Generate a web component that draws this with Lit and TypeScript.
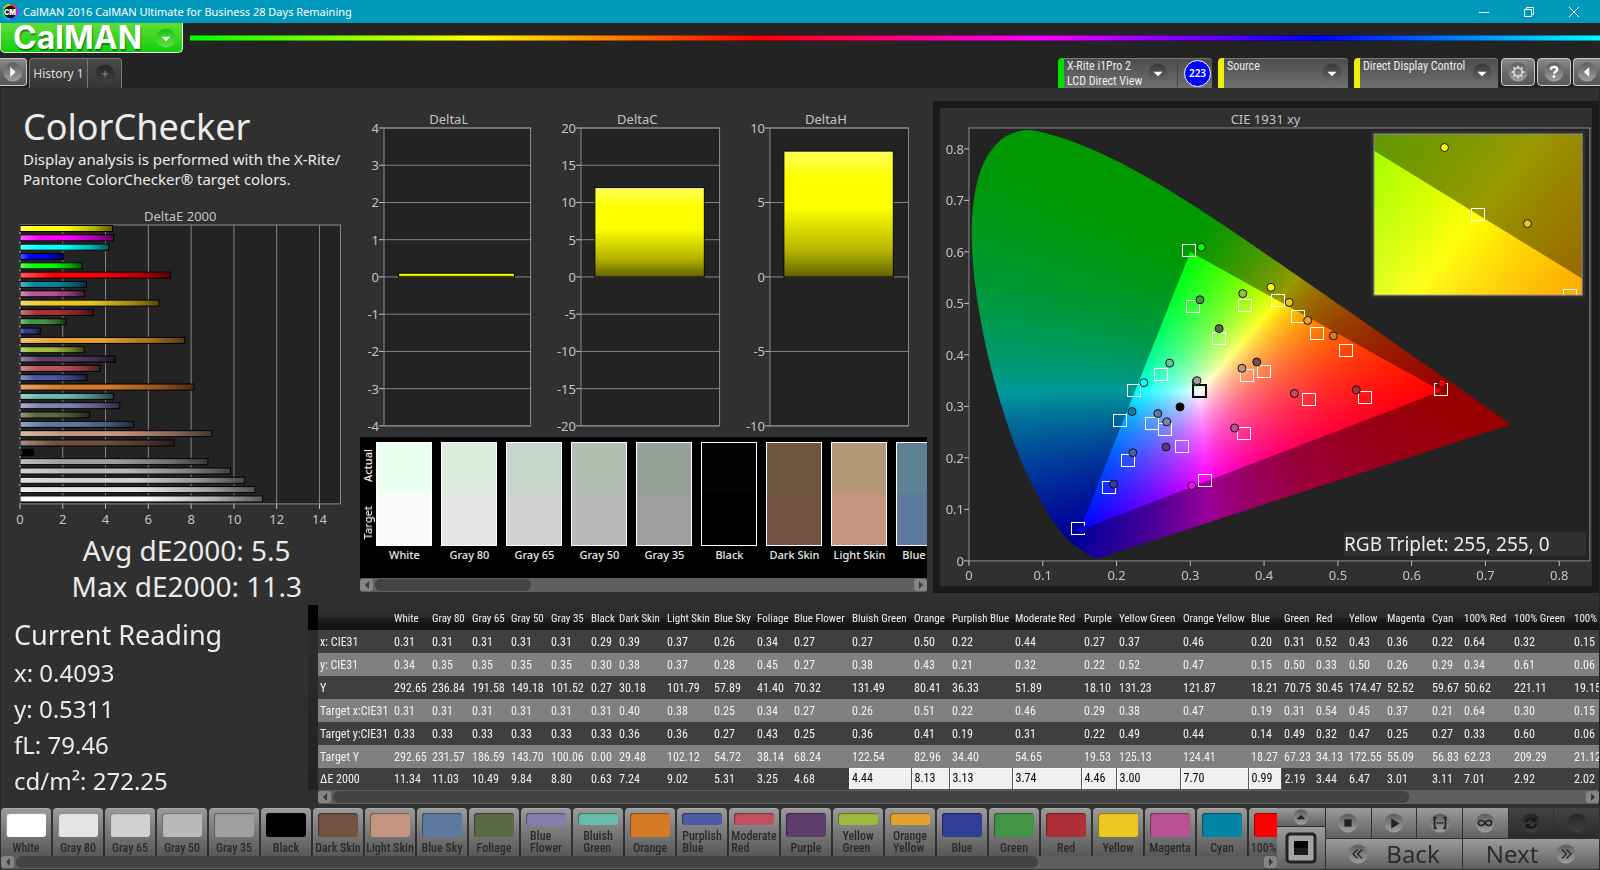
import { LitElement, html, svg, css } from "lit";
import { customElement, property } from "lit/decorators.js";
import { classMap } from "lit/directives/class-map.js";

interface Patch { name: string; color: string; actual?: string; twoLine?: boolean }

const PATCHES: Patch[] = [
  { name: "White", color: "#fafafa", actual: "#e9ffef" },
  { name: "Gray 80", color: "#e6e6e6", actual: "#dbecdf" },
  { name: "Gray 65", color: "#d1d1d1", actual: "#c7d6ca" },
  { name: "Gray 50", color: "#bababa", actual: "#b2c0b4" },
  { name: "Gray 35", color: "#9f9f9f", actual: "#96a197" },
  { name: "Black", color: "#000000", actual: "#030303" },
  { name: "Dark Skin", color: "#735244", actual: "#6c563c" },
  { name: "Light Skin", color: "#c39581", actual: "#b39979" },
  { name: "Blue Sky", color: "#5d7a9e", actual: "#5f8194" },
  { name: "Foliage", color: "#586b42" },
  { name: "Blue Flower", color: "#827fb0", twoLine: true },
  { name: "Bluish Green", color: "#67bdaa", twoLine: true },
  { name: "Orange", color: "#d77a28" },
  { name: "Purplish Blue", color: "#4b5ba5", twoLine: true },
  { name: "Moderate Red", color: "#c0505f", twoLine: true },
  { name: "Purple", color: "#5b3e6b" },
  { name: "Yellow Green", color: "#9dbb3e", twoLine: true },
  { name: "Orange Yellow", color: "#e6a22e", twoLine: true },
  { name: "Blue", color: "#323e95" },
  { name: "Green", color: "#449447" },
  { name: "Red", color: "#ae2f38" },
  { name: "Yellow", color: "#eac721" },
  { name: "Magenta", color: "#b95293" },
  { name: "Cyan", color: "#0386a3" },
  { name: "100% Red", color: "#ff0000" },
];

const DELTA_E: [number, string][] = [
  [4.33, "#ffff00"], [4.38, "#ff00ff"], [4.15, "#00ffff"], [2.02, "#0000ff"], [2.9, "#00ff00"],
  [7.05, "#ff0000"], [3.11, "#0386a3"], [3.01, "#b95293"], [6.5, "#eac721"], [3.44, "#ae2f38"],
  [2.15, "#449447"], [0.95, "#323e95"], [7.7, "#e6a22e"], [3.0, "#9dbb3e"], [4.46, "#5b3e6b"],
  [3.74, "#c0505f"], [3.13, "#4b5ba5"], [8.13, "#d77a28"], [4.38, "#67bdaa"], [4.66, "#827fb0"],
  [3.25, "#586b42"], [5.31, "#5d7a9e"], [8.97, "#c39581"], [7.2, "#735244"], [0.63, "#000000"],
  [8.78, "#9f9f9f"], [9.84, "#bababa"], [10.49, "#d1d1d1"], [10.99, "#e6e6e6"], [11.34, "#ffffff"],
];

const COLUMNS = [
  "White", "Gray 80", "Gray 65", "Gray 50", "Gray 35", "Black", "Dark Skin", "Light Skin", "Blue Sky",
  "Foliage", "Blue Flower", "Bluish Green", "Orange", "Purplish Blue", "Moderate Red", "Purple",
  "Yellow Green", "Orange Yellow", "Blue", "Green", "Red", "Yellow", "Magenta", "Cyan", "100% Red",
  "100% Green", "100% Blue",
];
const COLUMN_WIDTHS = [
  38, 40, 39, 40, 40, 28, 48, 47, 43, 37, 58, 62, 38, 63, 69, 35, 64, 68, 33, 32, 33, 38, 45, 32, 50, 60, 60,
];
const ROWS: [string, string][] = [
  ["x: CIE31", "0.31 0.31 0.31 0.31 0.31 0.29 0.39 0.37 0.26 0.34 0.27 0.27 0.50 0.22 0.44 0.27 0.37 0.46 0.20 0.31 0.52 0.43 0.36 0.22 0.64 0.32 0.15"],
  ["y: CIE31", "0.34 0.35 0.35 0.35 0.35 0.30 0.38 0.37 0.28 0.45 0.27 0.38 0.43 0.21 0.32 0.22 0.52 0.47 0.15 0.50 0.33 0.50 0.26 0.29 0.34 0.61 0.06"],
  ["Y", "292.65 236.84 191.58 149.18 101.52 0.27 30.18 101.79 57.89 41.40 70.32 131.49 80.41 36.33 51.89 18.10 131.23 121.87 18.21 70.75 30.45 174.47 52.52 59.67 50.62 221.11 19.15"],
  ["Target x:CIE31", "0.31 0.31 0.31 0.31 0.31 0.31 0.40 0.38 0.25 0.34 0.27 0.26 0.51 0.22 0.46 0.29 0.38 0.47 0.19 0.31 0.54 0.45 0.37 0.21 0.64 0.30 0.15"],
  ["Target y:CIE31", "0.33 0.33 0.33 0.33 0.33 0.33 0.36 0.36 0.27 0.43 0.25 0.36 0.41 0.19 0.31 0.22 0.49 0.44 0.14 0.49 0.32 0.47 0.25 0.27 0.33 0.60 0.06"],
  ["Target Y", "292.65 231.57 186.59 143.70 100.06 0.00 29.48 102.12 54.72 38.14 68.24 122.54 82.96 34.40 54.65 19.53 125.13 124.41 18.27 67.23 34.13 172.55 55.09 56.83 62.23 209.29 21.12"],
  ["ΔE 2000", "11.34 11.03 10.49 9.84 8.80 0.63 7.24 9.02 5.31 3.25 4.68 4.44 8.13 3.13 3.74 4.46 3.00 7.70 0.99 2.19 3.44 6.47 3.01 3.11 7.01 2.92 2.02"],
];
const SELECTED_FROM = 11;
const SELECTED_TO = 18;

const TARGETS: [number, number][] = [
  [0.299, 0.602], [0.304, 0.493], [0.375, 0.495], [0.4193, 0.5053], [0.4469, 0.4743], [0.473, 0.442],
  [0.512, 0.409], [0.34, 0.431], [0.261, 0.362], [0.4, 0.367], [0.378, 0.359], [0.224, 0.33],
  [0.64, 0.332], [0.537, 0.318], [0.461, 0.314], [0.206, 0.272], [0.249, 0.267], [0.267, 0.256],
  [0.373, 0.248], [0.29, 0.223], [0.216, 0.194], [0.32, 0.156], [0.191, 0.142], [0.148, 0.063],
];
const READINGS: [number, number, string][] = [
  [0.315, 0.609, "#00ff00"], [0.313, 0.507, "#449447"], [0.371, 0.519, "#9dbb3e"], [0.4093, 0.5311, "#ffff00"],
  [0.434, 0.5018, "#eac721"], [0.459, 0.467, "#e6a22e"], [0.494, 0.437, "#d77a28"], [0.339, 0.451, "#586b42"],
  [0.272, 0.384, "#67bdaa"], [0.237, 0.346, "#00ffff"], [0.308, 0.348, "#777777"], [0.309, 0.35, "#9f9f9f"],
  [0.37, 0.374, "#c39581"], [0.39, 0.386, "#735244"], [0.441, 0.325, "#c0505f"], [0.525, 0.332, "#ae2f38"],
  [0.641, 0.345, "#ff0000"], [0.286, 0.299, "#000000"], [0.256, 0.286, "#5d7a9e"], [0.221, 0.29, "#0386a3"],
  [0.268, 0.27, "#827fb0"], [0.36, 0.258, "#b95293"], [0.267, 0.221, "#5b3e6b"], [0.222, 0.21, "#4b5ba5"],
  [0.196, 0.149, "#323e95"], [0.302, 0.146, "#ff00ff"], [0.153, 0.061, "#0000ff"],
];
const LOCUS: [number, number][] = [
  [0.1741, 0.005], [0.1714, 0.0051], [0.1689, 0.0069], [0.1644, 0.0109], [0.1566, 0.0177], [0.144, 0.0297],
  [0.1355, 0.0399], [0.1241, 0.0578], [0.1096, 0.0868], [0.0913, 0.1327], [0.0687, 0.2007], [0.0454, 0.295],
  [0.0235, 0.4127], [0.0082, 0.5384], [0.0039, 0.6548], [0.0139, 0.7502], [0.0389, 0.812], [0.0743, 0.836],
  [0.1142, 0.8262], [0.1547, 0.8059], [0.1929, 0.7816], [0.2296, 0.7543], [0.2658, 0.7243], [0.3016, 0.6923],
  [0.3373, 0.6589], [0.3731, 0.6245], [0.4441, 0.5547], [0.5125, 0.4866], [0.5752, 0.4242], [0.627, 0.3725],
  [0.6915, 0.3083], [0.719, 0.2809], [0.7347, 0.2653],
];

const pct = (v: number) => `${(v * 100).toFixed(2)}%`;

const shine = svg`
  <linearGradient id="shineX"><stop offset="0" stop-color="#fff" stop-opacity=".35"/><stop offset=".22" stop-color="#fff" stop-opacity="0"/>
    <stop offset=".5" stop-color="#000" stop-opacity="0"/><stop offset=".8" stop-color="#000" stop-opacity=".3"/><stop offset="1" stop-color="#000" stop-opacity=".65"/></linearGradient>
  <linearGradient id="shineY" x2="0" y2="1"><stop offset="0" stop-color="#fff" stop-opacity=".35"/><stop offset=".22" stop-color="#fff" stop-opacity="0"/>
    <stop offset=".45" stop-color="#000" stop-opacity="0"/><stop offset=".8" stop-color="#000" stop-opacity=".3"/><stop offset="1" stop-color="#000" stop-opacity=".62"/></linearGradient>`;

const chartStyles = css`
  svg { display: block; overflow: visible; width: 100%; height: 100%; }
  text { fill: #c3c3c3; font: 13px "Noto Sans", sans-serif; }
  .end { text-anchor: end; }
  .mid { text-anchor: middle; }
  .field { fill: #232323; }
  .frame { fill: none; stroke: #8c8c8c; stroke-width: 1; }
  .grid { stroke: #858585; stroke-width: 1; }
  .tick { stroke: #c3c3c3; stroke-width: 1; }
  .title { color: #c3c3c3; font: 13px/18px "Noto Sans", sans-serif; text-align: center; }
`;

/** Horizontal bars, one per patch. */
@customElement("delta-e-chart")
class DeltaEChart extends LitElement {
  static styles = [chartStyles, css`
    :host { display: flex; flex-direction: column; }
    .plot { flex: 1; min-height: 0; }
  `];
  render() {
    const max = 14.98;
    return html`<div class="title">DeltaE 2000</div><div class="plot"><svg role="img" aria-label="DeltaE 2000 chart">
      <defs>${shine}</defs>
      <rect class="field" width="100%" height="100%"/>
      ${[0, 2, 4, 6, 8, 10, 12, 14].map((v) => svg`
        <line class="grid" x1=${pct(v / max)} x2=${pct(v / max)} y1="0" y2="100%"/>
        <svg y="100%" x=${pct(v / max)} width="1" height="1"><line class="tick" y1="0" y2="5"/><text class="mid" y="20">${v}</text></svg>`)}
      <rect class="frame" width="100%" height="100%"/>
      ${DELTA_E.map(([v, c], i) => svg`
        <rect x="0" y=${pct((0.5 + 9.33 * i) / 279)} width=${pct(v / max)} height="6" fill=${c}/>
        <rect x="0" y=${pct((0.5 + 9.33 * i) / 279)} width=${pct(v / max)} height="6" fill="url(#shineX)" stroke="#000"/>`)}
    </svg></div>`;
  }
}

/** Single-bar column chart around zero. */
@customElement("delta-chart")
class DeltaChart extends LitElement {
  @property() label = "";
  @property({ type: Number }) max = 4;
  @property({ type: Number }) step = 1;
  @property({ type: Number }) value = 0;
  static styles = [chartStyles, css`
    :host { display: flex; flex-direction: column; }
    .plot { flex: 1; min-height: 0; padding: 0 12px 0 38px; }
    :host([max="4"]) .plot { padding-left: 30px; }
  `];
  render() {
    const ticks: number[] = [];
    for (let v = this.max; v >= -this.max; v -= this.step) ticks.push(v);
    const y = (v: number) => (this.max - v) / (2 * this.max);
    return html`<div class="title">${this.label}</div><div class="plot"><svg role="img" aria-label=${this.label}>
      <defs>${shine}</defs>
      <rect class="field" width="100%" height="100%"/>
      ${ticks.map((v) => svg`<line class="grid" x1="0" x2="100%" y1=${pct(y(v))} y2=${pct(y(v))}/>
        <svg y=${pct(y(v))} width="1" height="1"><line class="tick" x1="-5" x2="0"/><text class="end" x="-5" y="5">${v}</text></svg>`)}
      <rect class="frame" width="100%" height="100%"/>
      <rect x="10%" width="79%" y=${pct(y(this.value))} height=${pct(this.value / (2 * this.max))} fill="#ff0"/>
      <rect x="10%" width="79%" y=${pct(y(this.value))} height=${pct(this.value / (2 * this.max))} fill="url(#shineY)" stroke="#000"/>
    </svg></div>`;
  }
}

/** Chromaticity field painted for a given xy window, with targets and readings over it. */
@customElement("cie-plot")
class CiePlot extends LitElement {
  @property({ type: Number }) x0 = 0;
  @property({ type: Number }) x1 = 0.8415;
  @property({ type: Number }) y0 = 0;
  @property({ type: Number }) y1 = 0.8405;
  @property({ type: Boolean }) axes = false;
  static styles = [chartStyles, css`
    :host { display: grid; background: #232323; }
    canvas, svg { grid-area: 1 / 1; width: 100%; height: 100%; min-height: 0; min-width: 0; }
    .target { fill: none; stroke: #fff; stroke-width: 1; shape-rendering: crispEdges; }
    .white { stroke: #000; stroke-width: 2; }
    .reading { stroke: #111; stroke-width: 1; }
    svg.marks { overflow: hidden; }
  `];

  firstUpdated() {
    const canvas = this.renderRoot.querySelector("canvas")!;
    const w = (canvas.width = Math.max(2, Math.round(this.clientWidth)));
    const h = (canvas.height = Math.max(2, Math.round(this.clientHeight)));
    const ctx = canvas.getContext("2d")!;
    const toX = (x: number) => ((x - this.x0) / (this.x1 - this.x0)) * w;
    const toY = (y: number) => ((this.y1 - y) / (this.y1 - this.y0)) * h;
    const paint = (dim: number) => {
      const layer = document.createElement("canvas");
      layer.width = w;
      layer.height = h;
      const lctx = layer.getContext("2d")!;
      const image = lctx.createImageData(w, h);
      for (let j = 0; j < h; j++) {
        const y = Math.max(0.0005, this.y1 - ((j + 0.5) / h) * (this.y1 - this.y0));
        for (let i = 0; i < w; i++) {
          const x = this.x0 + ((i + 0.5) / w) * (this.x1 - this.x0);
          const X = x / y;
          const Z = (1 - x - y) / y;
          const rgb = [
            3.2406 * X - 1.5372 - 0.4986 * Z,
            -0.9689 * X + 1.8758 + 0.0415 * Z,
            0.0557 * X - 0.204 + 1.057 * Z,
          ].map((v) => Math.max(0, v));
          const top = Math.max(...rgb) || 1;
          const at = (j * w + i) * 4;
          rgb.forEach((v, k) => { image.data[at + k] = (255 * dim * v) / top; });
          image.data[at + 3] = 255;
        }
      }
      lctx.putImageData(image, 0, 0);
      return layer;
    };
    const fillPath = (path: Path2D, dim: number) => {
      ctx.fillStyle = ctx.createPattern(paint(dim), "no-repeat")!;
      ctx.fill(path);
    };
    const locus = new Path2D();
    locus.moveTo(toX(LOCUS[0][0]), toY(LOCUS[0][1]));
    for (let i = 0; i < LOCUS.length - 1; i++) {
      const p0 = LOCUS[Math.max(0, i - 1)];
      const p1 = LOCUS[i];
      const p2 = LOCUS[i + 1];
      const p3 = LOCUS[Math.min(LOCUS.length - 1, i + 2)];
      locus.bezierCurveTo(
        toX(p1[0] + (p2[0] - p0[0]) / 6), toY(p1[1] + (p2[1] - p0[1]) / 6),
        toX(p2[0] - (p3[0] - p1[0]) / 6), toY(p2[1] - (p3[1] - p1[1]) / 6),
        toX(p2[0]), toY(p2[1]),
      );
    }
    locus.closePath();
    fillPath(locus, 0.6);
    const gamut = new Path2D();
    gamut.moveTo(toX(0.64), toY(0.33));
    gamut.lineTo(toX(0.3), toY(0.6));
    gamut.lineTo(toX(0.15), toY(0.06));
    gamut.closePath();
    fillPath(gamut, 1);
  }

  render() {
    const px = (x: number) => pct((x - this.x0) / (this.x1 - this.x0));
    const py = (y: number) => pct((this.y1 - y) / (this.y1 - this.y0));
    const ticks = [0, 0.1, 0.2, 0.3, 0.4, 0.5, 0.6, 0.7, 0.8];
    return html`<canvas></canvas>
      <svg class="marks">
        ${TARGETS.map(([x, y]) => svg`<svg x=${px(x)} y=${py(y)} width="1" height="1" overflow="visible"><rect class="target" x="-7" y="-6" width="13" height="12"/></svg>`)}
        <svg x=${px(0.313)} y=${py(0.33)} width="1" height="1" overflow="visible"><rect class="target white" x="-7" y="-6" width="13" height="12"/></svg>
        ${READINGS.map(([x, y, c]) => svg`<circle class="reading" cx=${px(x)} cy=${py(y)} r="4" fill=${c}/>`)}
      </svg>
      <svg>
        <rect class="frame" width="100%" height="100%"/>
        ${this.axes ? ticks.map((v) => svg`
          <svg x=${px(v)} y="100%" width="1" height="1"><line class="tick" y2="5"/><text class="mid" y="19">${v}</text></svg>
          <svg y=${py(v)} width="1" height="1"><line class="tick" x1="-5" x2="0"/><text class="end" x="-5" y="5">${v}</text></svg>`) : ""}
      </svg>`;
  }
}

@customElement("scroll-strip")
class ScrollStrip extends LitElement {
  @property({ type: Number }) size = 50;
  static styles = css`
    :host { display: flex; align-items: center; height: 14px; background: #5f5f5f; border-radius: 2px; }
    button { flex: none; width: 13px; height: 12px; padding: 0; border: 0; border-radius: 3px; background: #858585; display: grid; place-items: center; }
    svg { width: 6px; height: 8px; fill: #3a3a3a; }
    .track { flex: 1; margin: 0 2px; height: 12px; }
    .thumb { height: 100%; border-radius: 6px; background: #434343; }
  `;
  render() {
    return html`<button aria-label="Scroll left"><svg viewBox="0 0 6 8"><path d="M5 0v8L1 4z"/></svg></button>
      <div class="track"><div class="thumb" style="width:${this.size}%"></div></div>
      <button aria-label="Scroll right"><svg viewBox="0 0 6 8"><path d="M1 0v8l4-4z"/></svg></button>`;
  }
}

@customElement("app-root")
class AppRoot extends LitElement {
  static styles = css`
    :host { display: flex; flex-direction: column; height: 100vh; overflow: hidden; background: #232323; color: #ebebeb; font-family: "Noto Sans", "Open Sans", sans-serif; }
    * { box-sizing: border-box; }
    button { font-family: inherit; color: inherit; padding: 0; margin: 0; border: 0; cursor: pointer; }
    h1, h2, p { margin: 0; font-weight: 400; }

    .titlebar { flex: none; height: 23px; background: #0099bc; color: #fff; display: flex; align-items: center; font-size: 11px; padding-right: 4px; }
    .titlebar .appicon { width: 16px; height: 16px; margin: 0 5px 0 2px; }
    .titlebar .name { flex: 1; }
    .winbtn { width: 45px; height: 21px; background: none; display: grid; place-items: center; }
    .winbtn svg { width: 12px; height: 12px; fill: none; stroke: #fff; }

    .brandrow { flex: none; height: 30px; display: flex; gap: 7px; align-items: flex-start; }
    .brand { width: 183px; height: 30px; border: 1px solid #e8ffe8; border-top: 0; border-radius: 0 0 5px 5px; background: linear-gradient(#63de35, #0fd00f); display: flex; align-items: center; justify-content: space-between; padding: 0 6px 0 12px; }
    .brand span { font: 700 32px/28px Inter, sans-serif; color: #fff; text-shadow: 1px 2px 1px #00000066; }
    .brand svg { width: 20px; height: 20px; }
    .rainbow { flex: 1; margin-top: 12px; height: 6px; border: solid #0006; border-width: 1px 0; background: linear-gradient(90deg, #0f0, #ff0, #f00, #f0f, #00f, #0ff); }

    .tabrow { flex: none; height: 35px; padding-top: 5px; display: flex; align-items: flex-start; }
    .metal { background: linear-gradient(#8a8a8a, #6a6a6a 50%, #585858); border: 1px solid #c8c8c8; border-radius: 4px; display: grid; place-items: center; height: 28px; }
    .metal svg { width: 20px; height: 20px; }
    .metal.left { width: 27px; border-left: 0; border-radius: 0 4px 4px 0; }
    .metal.square { width: 34px; margin-right: 2px; }
    .metal.right { width: 27px; border-right: 0; border-radius: 4px 0 0 4px; }
    .tabs { display: flex; margin-left: 2px; height: 30px; border: 1px solid #777; border-bottom: 0; border-radius: 4px 4px 0 0; background: linear-gradient(#4a4a4a, #343434); }
    .tab { width: 58px; background: none; border-right: 1px solid #777; font-size: 12px; color: #dedede; }
    .tab.add { width: 33px; border: 0; display: grid; place-items: center; }
    .tab.add svg { width: 20px; height: 20px; }
    .devices { margin-left: auto; display: flex; }
    .device { height: 30px; display: flex; align-items: center; margin-right: 6px; border-left: 6px solid #f1ef00; border-radius: 4px 4px 0 0; background: linear-gradient(#4c4c4c, #707070); box-shadow: inset 0 1px #777; font: 12px/15px "Roboto Condensed", "Roboto", sans-serif; text-align: left; padding: 0 6px 0 3px; }
    .device .txt { flex: 1; align-self: flex-start; padding-top: 1px; white-space: nowrap; }
    .device svg { width: 20px; height: 20px; }
    .device.meter { width: 154px; border-color: #00e100; padding-right: 1px; }
    .device.source { width: 130px; }
    .device.display { width: 144px; margin-right: 3px; }
    .device .count { flex: none; margin-left: 9px; border-left: 1px solid #444; padding-left: 6px; height: 28px; display: grid; place-items: center; }
    .badge { width: 27px; height: 27px; border-radius: 50%; border: 1px solid #fff; background: #00f; font: 600 10px/25px "Noto Sans", sans-serif; text-align: center; color: #fff; }

    main { flex: 1; min-height: 0; display: flex; flex-direction: column; background: #303030; margin: 0 1px; }
    .upper { flex: 1; min-height: 0; display: grid; grid-template-columns: 353fr 575fr 668fr; }
    .summary { display: flex; flex-direction: column; }
    .summary h1 { font-size: 36px; line-height: 44px; padding: 17px 0 0 22px; }
    .summary p { font-size: 15px; line-height: 20px; padding: 0 0 0 22px; white-space: nowrap; }
    .summary delta-e-chart { flex: 1; margin: 18px 14px 0 19px; }
    .averages { text-align: center; font-size: 28px; line-height: 36px; padding: 28px 0 1px 18px; }

    .center { display: flex; flex-direction: column; min-width: 0; padding: 22px 3px 13px 6px; }
    .deltas { flex: 1; display: grid; grid-template-columns: repeat(3, 1fr); margin: 0 7px 0 -6px; padding-bottom: 11px; }
    .deltas delta-chart { min-width: 0; }
    .strip { background: #000; height: 141px; display: flex; overflow: hidden; }
    .sides { flex: none; width: 16px; height: 115px; display: grid; grid-template-rows: 1fr 1fr; justify-items: center; align-items: center; font-size: 11px; font-weight: 500; line-height: 14px; }
    .sides span { writing-mode: vertical-rl; rotate: 180deg; }
    .swatches { display: flex; gap: 9px; padding-top: 5px; }
    .swatch { flex: none; width: 56px; text-align: center; font-size: 11px; font-weight: 500; line-height: 16px; white-space: nowrap; }
    .chip { height: 104px; margin-bottom: 1px; border: 1px solid #fff; display: grid; grid-template-rows: 1fr 1fr; }

    .cie { margin: 13px 0 12px 3px; border: 7px solid #1a1a1a; padding: 3px 2px 25px 29px; display: flex; flex-direction: column; min-width: 0; background: #303030; }
    .cie .caption { text-align: center; font-size: 13px; line-height: 17px; color: #c3c3c3; margin-right: 28px; }
    .stage { flex: 1; display: grid; min-height: 0; grid-template: 100% / 100%; }
    .stage > * { grid-area: 1 / 1; }
    .inset { justify-self: end; align-self: start; width: 34.5%; height: 38.5%; margin: 3px 5px; border: 3px solid #303030; display: grid; }
    .triplet { justify-self: end; align-self: end; width: 242px; margin: 0 4px 5px; background: #303030; font-size: 19px; line-height: 24px; }

    .lower { flex: none; display: flex; padding-bottom: 2px; }
    .readings { flex: none; width: 307px; padding-left: 13px; }
    .readings h2 { font-size: 27px; line-height: 36px; margin: 12px 0 2px; }
    .readings div { font-size: 24px; line-height: 36px; }
    .gridwrap { flex: 1; min-width: 0; overflow: hidden; display: flex; }
    .gutter { flex: none; width: 10px; height: 185px; background: linear-gradient(#000 25px, #2c2c2c 25px, #222); }
    .sheet { flex: 1; min-width: 0; overflow: hidden; }
    table { table-layout: fixed; width: max-content; border-collapse: collapse; font: 12px/16px "Roboto Condensed", "Roboto", sans-serif; color: #f0f0f0; white-space: nowrap; }
    th, td { text-align: left; font-weight: 400; padding: 2px 0 0 3px; height: 23px; overflow: visible; }
    tbody th { padding-left: 2px; }
    thead th { height: 25px; padding-top: 3px; font-size: 11px; }
    thead tr { background: linear-gradient(#2f2f2f, #2a2a2a 50%, #1e1e1e 50%, #111); }
    tbody tr { background: #3f3f3f; }
    tbody tr:nth-child(even) { background: #808080; }
    tbody tr:last-child td, tbody tr:last-child th { height: 22px; padding-top: 0; }
    td.sel { background: #f0f0f0; color: #000; border: 1px solid #555; border-width: 0 1px 1px 0; box-shadow: inset 1px 1px #fff; }

    footer { flex: none; display: flex; height: 64px; background: #303030; padding: 2px 1px 1px; }
    .deck { flex: 1; min-width: 0; display: flex; flex-direction: column; }
    .patches { display: flex; gap: 2px; overflow: hidden; height: 50px; }
    .patch { flex: none; width: 50px; height: 50px; border-radius: 4px 4px 0 0; background: linear-gradient(#999, #555); border-top: 1px solid #aaa; display: flex; flex-direction: column; align-items: center; padding: 4px 0 4px; font: 500 12px/12px "Roboto Condensed", "Roboto", sans-serif; color: #2a2a2a; }
    .patch i { width: 40px; flex: 1; border-radius: 3px; box-shadow: inset 1px 1px 1px #0006; margin-bottom: 5px; }
    .patch span { text-align: left; white-space: nowrap; }
    .dock { flex: none; display: grid; grid-template-columns: 48px 273px; gap: 1px; }
    .stopcol { display: grid; grid-template-rows: 18px 1fr; gap: 1px; }
    .key { background: linear-gradient(#9b9b9b, #606060); display: flex; align-items: center; justify-content: center; gap: 18px; font-size: 24px; line-height: 28px; color: #2c2c2c; }
    .key svg { width: 20px; height: 20px; }
    .key.off { background: linear-gradient(#424242, #2c2c2c); }
    .stopcol .key:first-child svg { width: 16px; height: 16px; }
    .stopcol .key:last-child svg { width: 32px; height: 32px; }
    .transport { display: grid; grid-template-rows: 30px 1fr; gap: 1px; }
    .keys { display: grid; grid-template-columns: repeat(6, 1fr); gap: 1px; }
    .nav { display: grid; grid-template-columns: 1fr 1fr; gap: 1px; }
  `;

  private knob(content: unknown, fill = "url(#k)") {
    return html`<svg viewBox="0 0 22 22" aria-hidden="true">
      <defs><linearGradient id="k" x2="0" y2="1"><stop offset="0" stop-color="#5c5c5c"/><stop offset="1" stop-color="#a0a0a0"/></linearGradient>
      <linearGradient id="d" x2="0" y2="1"><stop offset="0" stop-color="#383838"/><stop offset="1" stop-color="#6c6c6c"/></linearGradient>
      <linearGradient id="n" x2="0" y2="1"><stop offset="0" stop-color="#262626"/><stop offset="1" stop-color="#404040"/></linearGradient>
      <linearGradient id="g" x2="0" y2="1"><stop offset="0" stop-color="#10c410"/><stop offset="1" stop-color="#6be04a"/></linearGradient></defs>
      <circle cx="11" cy="11" r="10.5" fill=${fill} />${content}</svg>`;
  }

  render() {
    const down = svg`<path d="M6 9.5h10L11 14.500z" fill="#fff"/>`;
    return html`
      <header class="titlebar">
        <svg class="appicon" viewBox="0 0 16 16"><g stroke-width="2" fill="none"><path d="M8 1a7 7 0 0 1 6.100 3.500" stroke="#f33"/><path d="M14.100 4.500A7 7 0 0 1 14 11.500" stroke="#f0f"/><path d="M14 11.500A7 7 0 0 1 8 15" stroke="#55f"/><path d="M8 15A7 7 0 0 1 2 11.500" stroke="#0cf"/><path d="M2 11.500A7 7 0 0 1 2 4.500" stroke="#2d2"/><path d="M2 4.500A7 7 0 0 1 8 1" stroke="#fc0"/></g><circle cx="8" cy="8" r="6.200" fill="#111"/><text x="8" y="10.500" font-size="7" font-weight="900" font-family="Inter" text-anchor="middle" fill="#fff">CM</text></svg>
        <span class="name">CalMAN 2016 CalMAN Ultimate for Business 28 Days Remaining</span>
        <button class="winbtn" aria-label="Minimize"><svg viewBox="0 0 12 12"><path d="M1 6.500h10"/></svg></button>
        <button class="winbtn" aria-label="Restore"><svg viewBox="0 0 12 12"><path d="M1.500 3.500h7v7h-7zM3.500 3.500v-2h7v7h-2"/></svg></button>
        <button class="winbtn" aria-label="Close"><svg viewBox="0 0 12 12"><path d="M1 1l10 10M11 1L1 11"/></svg></button>
      </header>
      <div class="brandrow">
        <button class="brand"><span>CalMAN</span>${this.knob(down, "url(#g)")}</button>
        <div class="rainbow"></div>
      </div>
      <nav class="tabrow">
        <button class="metal left" aria-label="Expand">${this.knob(svg`<path d="M8 5.500v11l6-5.500z" fill="#fff"/>`)}</button>
        <div class="tabs">
          <button class="tab">History 1</button>
          <button class="tab add" aria-label="Add tab">${this.knob(svg`<path d="M11 7.500v7M7.500 11h7" stroke="#999"/>`, "url(#n)")}</button>
        </div>
        <div class="devices">
          <button class="device meter"><span class="txt">X-Rite i1Pro 2<br>LCD Direct View</span>${this.knob(down, "url(#d)")}<span class="count"><span class="badge">223</span></span></button>
          <button class="device source"><span class="txt">Source</span>${this.knob(down, "url(#d)")}</button>
          <button class="device display"><span class="txt">Direct Display Control</span>${this.knob(down, "url(#d)")}</button>
          <button class="metal square" aria-label="Settings">${this.knob(svg`<g stroke="#d8d8d8" fill="none"><circle cx="11" cy="11" r="4.500" stroke-width="1.600"/><path d="M11 4v2.500M11 15.500V18M4 11h2.500M15.500 11H18M6 6l1.800 1.800M14.200 14.200L16 16M16 6l-1.800 1.800M7.800 14.200L6 16" stroke-width="2"/></g>`)}</button>
          <button class="metal square" aria-label="Help">${this.knob(svg`<path d="M7.500 8.500C7.500 4.500 14.500 4.500 14.500 8.500C14.500 10.500 11 10.500 11 13" fill="none" stroke="#fff" stroke-width="2.500"/><circle cx="11" cy="16" r="1.600" fill="#fff"/>`)}</button>
          <button class="metal right" aria-label="Collapse">${this.knob(svg`<path d="M13.500 5.500v11l-6-5.500z" fill="#fff"/>`)}</button>
        </div>
      </nav>
      <main>
        <div class="upper">
          <section class="summary">
            <h1>ColorChecker</h1>
            <p>Display analysis is performed with the X-Rite/<br>Pantone ColorChecker® target colors.</p>
            <delta-e-chart></delta-e-chart>
            <div class="averages">Avg dE2000: 5.5<br>Max dE2000: 11.3</div>
          </section>
          <section class="center">
            <div class="deltas">
              <delta-chart label="DeltaL" max="4" step="1" value="0.1"></delta-chart>
              <delta-chart label="DeltaC" max="20" step="5" value="12"></delta-chart>
              <delta-chart label="DeltaH" max="10" step="5" value="8.45"></delta-chart>
            </div>
            <div class="strip">
              <div class="sides"><span>Actual</span><span>Target</span></div>
              <div class="swatches">${PATCHES.slice(0, 9).map((p) => html`<div class="swatch">
                <div class="chip"><div style="background:${p.actual}"></div><div style="background:${p.color}"></div></div>${p.name}</div>`)}</div>
            </div>
            <scroll-strip size="29"></scroll-strip>
          </section>
          <section class="cie">
            <div class="caption">CIE 1931 xy</div>
            <div class="stage">
              <cie-plot axes></cie-plot>
              <div class="inset"><cie-plot x0="0.3883" x1="0.4503" y0="0.4743" y1="0.5363"></cie-plot></div>
              <div class="triplet">RGB Triplet: 255, 255, 0</div>
            </div>
          </section>
        </div>
        <div class="lower">
          <section class="readings">
            <h2>Current Reading</h2>
            <div>x: 0.4093</div><div>y: 0.5311</div><div>fL: 79.46</div><div>cd/m²: 272.25</div>
          </section>
          <div class="gridwrap">
            <div class="gutter"></div>
            <div class="sheet">
              <table>
                <colgroup><col style="width:73px">${COLUMN_WIDTHS.map((w) => html`<col style="width:${w}px">`)}</colgroup>
                <thead><tr><th></th>${COLUMNS.map((c) => html`<th scope="col">${c}</th>`)}</tr></thead>
                <tbody>${ROWS.map(([name, values], r) => html`<tr><th scope="row">${name}</th>${values.split(" ").map((v, i) =>
                  html`<td class=${classMap({ sel: r === 6 && i >= SELECTED_FROM && i <= SELECTED_TO })}>${v}</td>`)}</tr>`)}</tbody>
              </table>
              <scroll-strip size="86"></scroll-strip>
            </div>
          </div>
        </div>
      </main>
      <footer>
        <div class="deck">
          <div class="patches">${PATCHES.map((p) => html`<button class="patch"><i style="background:${p.name === "White" ? "#fff" : p.color}"></i><span>${p.twoLine ? html`${p.name.split(" ")[0]}<br>${p.name.split(" ")[1]}` : p.name}</span></button>`)}</div>
          <scroll-strip size="82"></scroll-strip>
        </div>
        <div class="dock">
          <div class="stopcol">
            <button class="key" aria-label="Raise">${this.knob(svg`<path d="M5 14h12l-6-6z" fill="#222"/>`)}</button>
            <button class="key" aria-label="Stop pattern"><svg viewBox="0 0 32 32"><rect x="2" y="2" width="28" height="28" rx="3" fill="#a5a5a5" stroke="#222" stroke-width="3"/><path d="M9 9h14v14H9z" fill="#1c1c1c"/><path d="M9 9h14v7H9z" fill="#000"/></svg></button>
          </div>
          <div class="transport">
            <div class="keys">
              <button class="key" aria-label="Stop">${this.knob(svg`<path d="M7 7h8v8H7z" fill="#222"/>`)}</button>
              <button class="key" aria-label="Play">${this.knob(svg`<path d="M8 6v11l9-5.500z" fill="#222"/>`)}</button>
              <button class="key" aria-label="Read series">${this.knob(svg`<path d="M7.500 5H5v12h2.500M14.500 5H17v12h-2.500" fill="none" stroke="#222" stroke-width="2"/><path d="M7.500 11h1.500M10.200 11h1.600M13 11h1.500" stroke="#222" stroke-width="2"/>`)}</button>
              <button class="key" aria-label="Read continuous">${this.knob(svg`<path d="M11 11C9 7.500 3.800 7 3.800 11S9 14.500 11 11S18.200 7 18.200 11S13 14.500 11 11z" fill="none" stroke="#222" stroke-width="1.800"/>`)}</button>
              <button class="key off" aria-label="Refresh">${this.knob(svg`<path d="M5.500 10.500a5.500 5 0 0 1 9-3.500M16.500 11.500a5.500 5 0 0 1-9 3.500" fill="none" stroke="#161616" stroke-width="2.200"/><path d="M17 4v5.500h-5.500zM5 18v-5.500h5.500z" fill="#161616"/>`, "url(#n)")}</button>
              <button class="key off" aria-label="Record">${this.knob("", "url(#n)")}</button>
            </div>
            <div class="nav">
              <button class="key">${this.knob(svg`<path d="M10.500 6l-5 5 5 5M15.500 6l-5 5 5 5" fill="none" stroke="#222" stroke-width="1.400"/>`)}Back</button>
              <button class="key">Next${this.knob(svg`<path d="M6.500 6l5 5-5 5M11.500 6l5 5-5 5" fill="none" stroke="#222" stroke-width="1.400"/>`)}</button>
            </div>
          </div>
        </div>
      </footer>`;
  }
}
